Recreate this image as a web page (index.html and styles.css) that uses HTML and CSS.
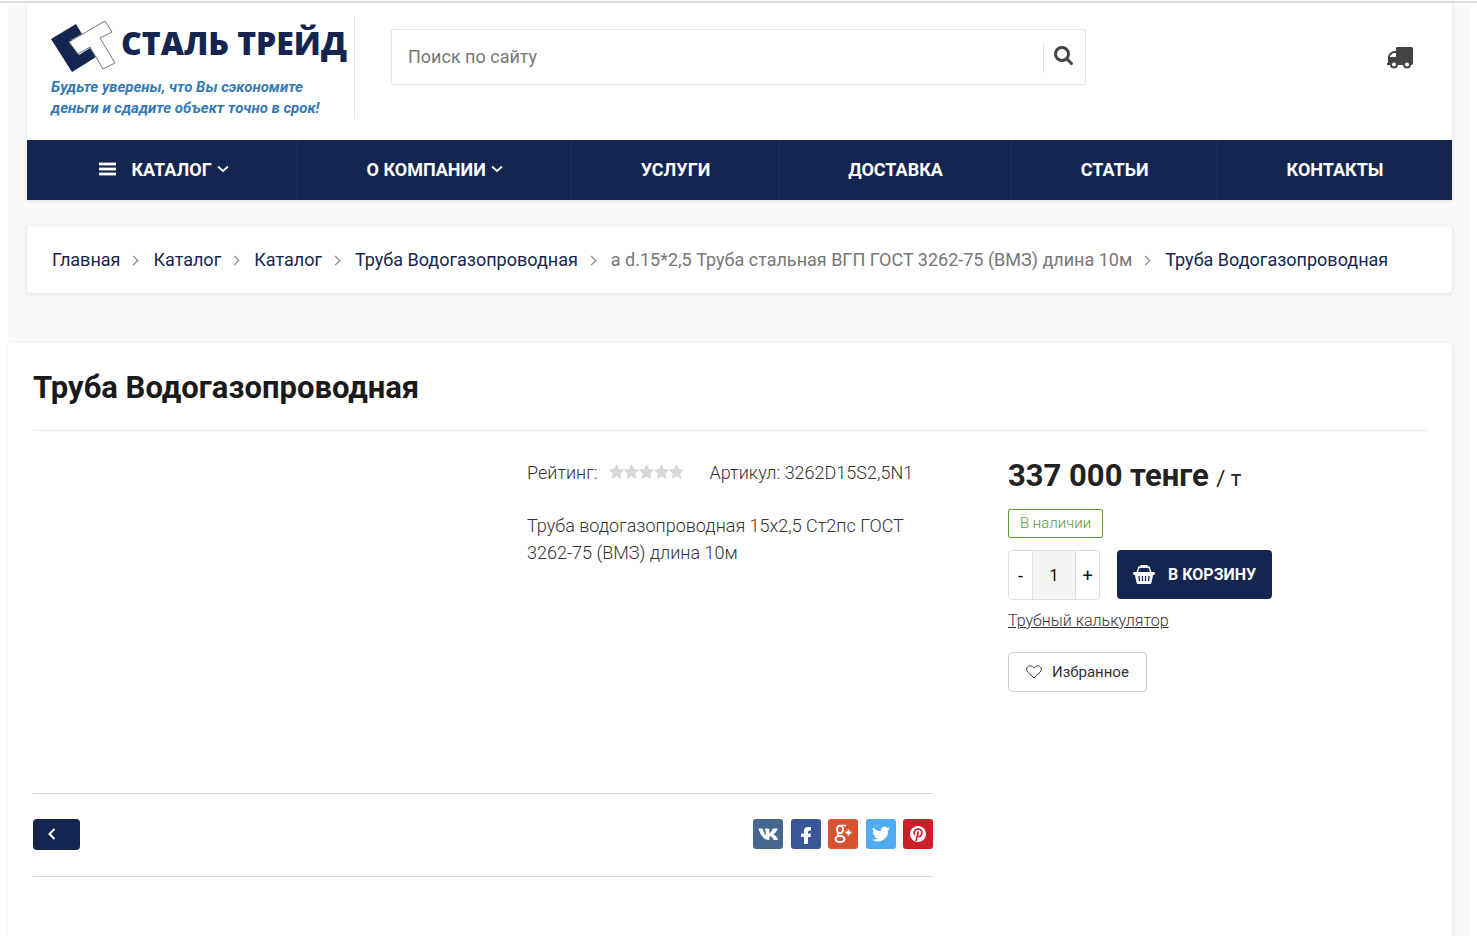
FILE: index.html
```html
<!DOCTYPE html>
<html lang="ru">
<head>
  <meta charset="UTF-8">
  <meta name="viewport" content="width=device-width, initial-scale=1.0">
  <title>Труба Водогазопроводная</title>
  <link rel="stylesheet" href="styles.css">
</head>
<body>

  <div class="page">
    <header class="header">
      <div class="header-top">
        <a class="logo" href="#">
          <span class="logo-row">
            <svg class="logo-mark" width="66" height="54" viewBox="0 0 66 54" aria-hidden="true">
              <path fill="#14264f" d="M0 20 25 5 31 15 20 21 28 36 39 29 45 38 21 53Z"/>
              <path fill="#fff" stroke="#777" d="M18 23 54 2 61 13 49 19 64 44 52 50 39 28 27 35Z"/>
            </svg>
            <span class="logo-name">СТАЛЬ ТРЕЙД</span>
          </span>
          <span class="slogan">Будьте уверены, что Вы сэкономите деньги и сдадите объект точно в срок!</span>
        </a>

        <form class="search">
          <input class="search-input" type="text" placeholder="Поиск по сайту" aria-label="Поиск по сайту">
          <button class="search-button" type="button" aria-label="Найти">
            <svg width="20" height="20" viewBox="0 0 20 20" fill="none" stroke="#444" stroke-width="3" stroke-linecap="round">
              <circle cx="8" cy="8" r="6.500"/>
              <path d="M13 13 17.500 17.500"/>
            </svg>
          </button>
        </form>

        <a class="delivery" href="#" aria-label="Корзина">
          <svg width="26" height="22" viewBox="0 0 26 22">
            <path fill="#444" d="M10 0H24.500Q26 0 26 1.500V16.500Q26 18 24 18H0V16H1V10Q1 8 3 6L5 4.500Q6 4 7 4H9V1Q9 0 10 0Z"/>
            <path fill="#fff" d="M3 10V9L6 6H9V10Z"/>
            <circle cx="7" cy="17.500" r="3" fill="#fff" stroke="#444" stroke-width="2"/>
            <circle cx="20" cy="17.500" r="3" fill="#fff" stroke="#444" stroke-width="2"/>
          </svg>
        </a>
      </div>

      <nav class="menu">
        <a class="menu-catalog" href="#">
          <svg class="burger" width="17" height="14" viewBox="0 0 17 14" fill="#fff"><path d="M0 1H17V3H0ZM0 6H17V8H0ZM0 11H17V13H0Z" stroke="#fff" stroke-width=".8"/></svg>
          КАТАЛОГ
          <svg class="arrow" width="12" height="8" viewBox="0 0 12 8" fill="none" stroke="#fff" stroke-width="1.700"><path d="M1 1.500 6 6 11 1.500"/></svg>
        </a>
        <a href="#">
          О КОМПАНИИ
          <svg class="arrow" width="12" height="8" viewBox="0 0 12 8" fill="none" stroke="#fff" stroke-width="1.700"><path d="M1 1.500 6 6 11 1.500"/></svg>
        </a>
        <a href="#">УСЛУГИ</a>
        <a href="#">ДОСТАВКА</a>
        <a href="#">СТАТЬИ</a>
        <a href="#">КОНТАКТЫ</a>
      </nav>
    </header>

    <ul class="breadcrumbs">
      <li><a href="#">Главная</a></li>
      <li><a href="#">Каталог</a></li>
      <li><a href="#">Каталог</a></li>
      <li><a href="#">Труба Водогазопроводная</a></li>
      <li>а d.15*2,5 Труба стальная ВГП ГОСТ 3262-75 (ВМЗ) длина 10м</li>
      <li><a href="#">Труба Водогазопроводная</a></li>
    </ul>

    <main class="product">
      <h1>Труба Водогазопроводная</h1>

      <div class="product-body">
        <div class="product-main">
          <div class="info">
            <div class="meta">
              <span>Рейтинг:</span>
              <svg class="stars" width="75" height="18" viewBox="0 0 75 18" fill="#d8d8d8" role="img" aria-label="0 из 5">
                <defs><path id="star" d="M7.500 0 9.900 5 15.200 5.700 11.300 9.500 12.300 15 7.500 12.400 2.700 15 3.700 9.500 -.2 5.700 5.100 5Z"/></defs>
                <use href="#star"/>
                <use href="#star" x="15"/>
                <use href="#star" x="30"/>
                <use href="#star" x="45"/>
                <use href="#star" x="60"/>
              </svg>
              <span>Артикул: 3262D15S2,5N1</span>
            </div>
            <p>Труба водогазопроводная 15х2,5 Ст2пс ГОСТ 3262-75 (ВМЗ) длина 10м</p>
          </div>

          <div class="bottom-bar">
            <button class="back-button" type="button" aria-label="Назад">
              <svg width="8" height="12" viewBox="0 0 8 12" fill="none" stroke="#fff" stroke-width="2"><path d="M6.500 1 1.500 6 6.500 11"/></svg>
            </button>
            <div class="share">
              <a class="vk" href="#" aria-label="ВКонтакте">
                <svg width="22" height="22" viewBox="0 0 24 24" fill="#fff"><path d="M13 18.500C6.500 18.500 3.500 12 1.500 6H6C7 9 8 12 9.500 13V9.500C9.500 8 8.800 7.500 8 7C9 5.500 13.500 5.500 13.500 7V11.500C15.500 10.500 16.500 8 17.300 6H22.500C22 8.500 20 11 18 12.300C20 13.500 22 15.500 23 18.500H18.300C17.500 16.500 15.700 14.800 13.500 14.300V18.500Z"/></svg>
              </a>
              <a class="fb" href="#" aria-label="Facebook">
                <svg width="22" height="22" viewBox="0 0 22 22" fill="#fff"><path d="M9 21V14H6V10.500H9V8Q9 4 13 4H16V7.500H14.500Q13 7.500 13 9V10.500H16L15.500 14H13V21Z"/></svg>
              </a>
              <a class="gp" href="#" aria-label="Google Plus">
                <svg width="22" height="22" viewBox="0 0 22 22" fill="none" stroke="#fff"><ellipse cx="8" cy="6.500" rx="3" ry="3.800" stroke-width="2"/><path d="M9 2.500H14" stroke-width="1.500"/><path d="M6.500 10Q4.500 12 7.500 12.800" stroke-width="1.800"/><ellipse cx="8" cy="16" rx="4.500" ry="3" stroke-width="2"/><path d="M13.500 9.500H19.500M16.500 6.500V12.500" stroke-width="1.800"/></svg>
              </a>
              <a class="tw" href="#" aria-label="Twitter">
                <svg width="18" height="18" viewBox="0 0 24 24" fill="#fff"><path d="M24 4.600a10 10 0 0 1-2.800.8 5 5 0 0 0 2.200-2.700 10 10 0 0 1-3.100 1.200A4.900 4.900 0 0 0 11.900 8.400 14 14 0 0 1 1.700 3.200a4.900 4.900 0 0 0 1.500 6.600A5 5 0 0 1 1 9.200a4.900 4.900 0 0 0 4 4.900 5 5 0 0 1-2.200.1 4.900 4.900 0 0 0 4.600 3.400A10 10 0 0 1 0 19.600 14 14 0 0 0 21.500 7.100 10 10 0 0 0 24 4.600Z"/></svg>
              </a>
              <a class="pt" href="#" aria-label="Pinterest">
                <svg width="18" height="18" viewBox="0 0 18 18"><circle cx="9" cy="9" r="8" fill="#fff"/><path fill="none" stroke="#cb2027" stroke-width="1.600" d="M5.800 9.800C3.500 6.500 6.500 4 9.300 4C15 4.500 13 12 9.800 11.500Q8.500 11.300 8.300 10M9.400 6.500 7 16"/></svg>
              </a>
            </div>
          </div>
        </div>

        <aside class="buy">
          <div class="price">337 000 тенге <span>/ т</span></div>
          <span class="stock">В наличии</span>
          <div class="cart-row">
            <div class="quantity">
              <button type="button">-</button>
              <input type="text" value="1" aria-label="Количество">
              <button type="button">+</button>
            </div>
            <button class="cart-button" type="button">
              <svg width="22" height="20" viewBox="0 0 22 20">
                <path fill="none" stroke="#fff" stroke-width="1.500" stroke-linejoin="round" d="M4 8 6 2H16L18 8"/>
                <path fill="#fff" d="M7.500 0H14.500V3H7.500ZM1 7H21Q22 7 22 8.500Q22 10 20 10L18.500 17.500Q18 19 17 19H5Q4 19 3.500 17.500L2 10Q0 10 0 8.500Q0 7 1 7Z"/>
                <path stroke="#14264f" stroke-width="1.300" d="M6 11 6.500 16M9.500 11V16M12.500 11V16M16 11 15.500 16"/>
              </svg>
              В КОРЗИНУ
            </button>
          </div>
          <a class="calc" href="#">Трубный калькулятор</a>
          <button class="favorite" type="button">
            <svg width="16" height="14" viewBox="0 0 16 14" fill="none" stroke="#333"><path d="M8 13 2 7.300C-1 4 1.500.8 4.300.8C6 .8 7.300 1.800 8 3C8.700 1.800 10 .8 11.700.8C14.500.8 17 4 14 7.300Z"/></svg>
            Избранное
          </button>
        </aside>
      </div>
    </main>
  </div>

</body>
</html>
```
FILE: styles.css
```css
* {
  box-sizing: border-box;
}

body {
  margin: 0;
  padding-top: 1px;
  font-family: Roboto, "Noto Sans", sans-serif;
  font-size: 18px;
  color: #333;
  background-color: #fff;
}

a {
  color: #14264f;
  text-decoration: none;
}

button, input {
  font-family: inherit;
  border: none;
  padding: 0;
  background: none;
  color: inherit;
}

button {
  cursor: pointer;
}

svg {
  display: block;
  flex: none;
}

body::before {
  content: "";
  display: block;
  height: 2px;
  background-color: #dcdee0;
}

.page {
  display: flex;
  flex-direction: column;
  min-height: calc(100vh - 3px);
  margin: 0 6px 0 8px;
  padding-right: 19px;
  background-color: #f9f9f9;
}

/* header */
.header {
  margin-left: 19px;
  background-color: #fff;
  box-shadow: 0 1px 4px rgba(0, 0, 0, 0.1);
}

.header-top {
  display: flex;
  align-items: flex-start;
  height: 137px;
  padding: 13px 39px 0 24px;
}

.logo {
  width: 304px;
  height: 103px;
  border-right: 1px solid #e5e5e5;
  color: #14264f;
}

.logo-row {
  display: flex;
  align-items: flex-start;
  gap: 4px;
  height: 61px;
  padding-top: 3px;
}

.logo-name {
  padding-top: 4px;
  font-family: "Open Sans", sans-serif;
  font-size: 32px;
  font-weight: 800;
  line-height: 40px;
  white-space: nowrap;
}

.slogan {
  display: block;
  width: 290px;
  font-size: 15px;
  font-weight: 700;
  font-style: italic;
  line-height: 21px;
  color: #337ab7;
}

.search {
  display: flex;
  align-items: center;
  width: 695px;
  height: 56px;
  margin: 13px auto 0 36px;
  border: 1px solid #e5e5e5;
  border-radius: 2px;
}

.search-input {
  flex: 1;
  height: 54px;
  padding: 0 16px 2px;
  font-size: 18px;
}

.search-input::placeholder {
  color: #777;
}

.search-button {
  display: flex;
  justify-content: center;
  align-items: center;
  width: 42px;
  height: 31px;
  padding: 0 2px 2px 0;
  border-left: 1px solid #e5e5e5;
}

.delivery {
  margin-top: 31px;
}

.menu {
  display: flex;
  height: 60px;
  background-color: #14264f;
}

.menu a {
  flex: 1 1 auto;
  display: flex;
  justify-content: center;
  align-items: center;
  padding-bottom: 2px;
  border-right: 1px solid #20325b;
  font-weight: 700;
  color: #fff;
}

.menu a:last-child {
  border-right: none;
}

.menu .menu-catalog {
  padding-left: 4px;
}

.burger {
  margin-right: 15px;
}

.arrow {
  margin-left: 5px;
}

/* breadcrumbs */
.breadcrumbs {
  display: flex;
  align-items: center;
  height: 67px;
  margin: 26px 0 50px 19px;
  padding: 0 25px;
  list-style: none;
  white-space: nowrap;
  background-color: #fff;
  border-radius: 4px;
  box-shadow: 0 1px 4px rgba(0, 0, 0, 0.12);
  color: #777;
}

.breadcrumbs li {
  display: flex;
  align-items: center;
}

.breadcrumbs li + li::before {
  content: "";
  width: 6px;
  height: 6px;
  margin: 2px 16px 0 10px;
  border-top: 1px solid #777;
  border-right: 1px solid #777;
  transform: rotate(45deg);
}

/* product */
.product {
  flex: 1;
  padding: 0 25px;
  background-color: #fff;
  border-radius: 4px 4px 0 0;
  box-shadow: 0 1px 4px rgba(0, 0, 0, 0.1);
}

h1 {
  margin: 0;
  padding: 25px 0 22px;
  border-bottom: 1px solid #eaeaea;
  font-size: 31px;
  font-weight: 700;
  line-height: 40px;
  color: #1a1a1a;
}

.product-body {
  display: flex;
  gap: 75px;
}

.product-main {
  width: 900px;
}

.info {
  min-height: 362px;
  padding: 28px 0 0 494px;
  font-weight: 300;
}

.meta {
  display: flex;
  align-items: center;
  line-height: 27px;
  white-space: nowrap;
}

.stars {
  margin: 0 26px 0 11px;
}

.info p {
  margin: 26px 0 0;
  line-height: 27px;
}

.bottom-bar {
  display: flex;
  justify-content: space-between;
  height: 84px;
  padding-top: 25px;
  border-top: 1px solid #d8d8d8;
  border-bottom: 1px solid #d8d8d8;
}

.back-button {
  width: 47px;
  height: 31px;
  padding: 0 0 2px 15px;
  background-color: #14264f;
  border-radius: 4px;
}

.share {
  display: flex;
  justify-content: space-between;
  width: 180px;
}

.share a {
  display: flex;
  justify-content: center;
  align-items: center;
  width: 30px;
  height: 30px;
  border-radius: 3px;
}

.vk {
  background-color: #45668e;
}

.fb {
  background-color: #3b5599;
}

.gp {
  background-color: #d95232;
}

.tw {
  background-color: #50abf1;
}

.pt {
  background-color: #cb2027;
}

/* price and cart */
.buy {
  flex: 1;
  display: flex;
  flex-direction: column;
  align-items: flex-start;
  padding-top: 25px;
}

.price {
  font-size: 31px;
  font-weight: 700;
  line-height: 40px;
  color: #222;
}

.price span {
  font-size: 22px;
  font-weight: 400;
}

.stock {
  height: 29px;
  margin-top: 10px;
  padding: 0 11px;
  border: 1px solid #5b9a2f;
  border-radius: 2px;
  font-size: 15px;
  font-weight: 300;
  line-height: 27px;
  color: #5b9a2f;
}

.cart-row {
  display: flex;
  gap: 17px;
  margin-top: 12px;
}

.quantity {
  display: flex;
  width: 92px;
  height: 50px;
  border: 1px solid #dfdfdf;
  border-radius: 4px;
  font-size: 16px;
  color: #111;
}

.quantity button {
  flex: 1;
  font-size: 18px;
}

.quantity input {
  width: 44px;
  border: 1px solid #dfdfdf;
  border-width: 0 1px;
  background-color: #f5f5f7;
  font-size: 16px;
  text-align: center;
}

.cart-button {
  display: flex;
  align-items: center;
  gap: 13px;
  height: 49px;
  padding: 0 16px;
  background-color: #14264f;
  border-radius: 4px;
  font-size: 16px;
  font-weight: 700;
  color: #fff;
}

.calc {
  margin-top: 10px;
  font-size: 16px;
  font-weight: 300;
  line-height: 21px;
  color: #333;
  text-decoration: underline;
}

.favorite {
  display: flex;
  align-items: center;
  gap: 10px;
  height: 40px;
  margin-top: 21px;
  padding: 0 17px;
  border: 1px solid #ccc;
  border-radius: 4px;
  font-size: 15px;
}
```
